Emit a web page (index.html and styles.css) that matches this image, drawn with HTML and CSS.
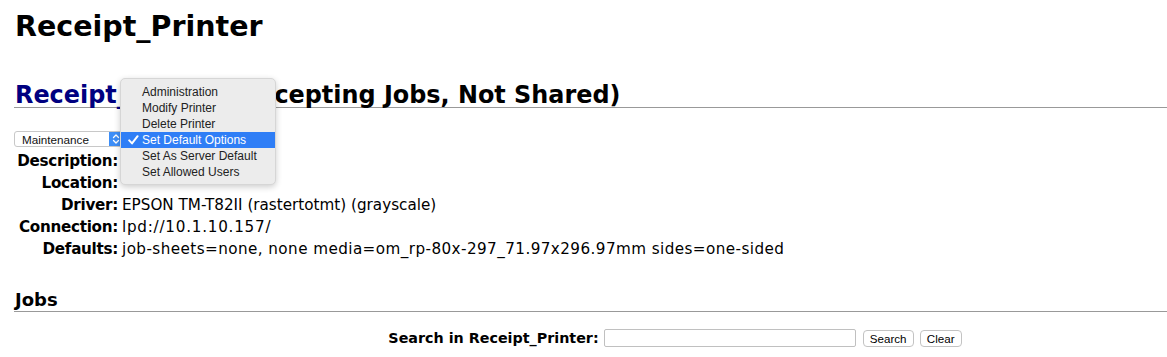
FILE: index.html
```html
<!DOCTYPE html>
<html>
<head>
<meta charset="utf-8">
<title>Receipt_Printer - CUPS</title>
<link rel="stylesheet" href="styles.css">
</head>
<body>
<div class="page">
  <h1 class="title">Receipt_Printer</h1>
  <h2 class="printer-title"><a class="printer-link" href="#">Receipt_Printer</a> (Accepting Jobs, Not Shared)</h2>
  <div class="op-row">
    <div class="select">
      <span class="select-label">Maintenance</span>
      <span class="select-btn">
        <svg width="8" height="12" viewBox="0 0 8 12"><path d="M1.5 4.5 L4 2 L6.5 4.5 M1.5 7.5 L4 10 L6.5 7.5" fill="none" stroke="#fff" stroke-width="1.3" stroke-linecap="round" stroke-linejoin="round"/></svg>
      </span>
    </div>
  </div>
  <dl class="info">
    <dt>Description:</dt><dd></dd>
    <dt>Location:</dt><dd></dd>
    <dt>Driver:</dt><dd class="val-driver">EPSON TM-T82II (rastertotmt) (grayscale)</dd>
    <dt>Connection:</dt><dd class="val-conn">lpd://10.1.10.157/</dd>
    <dt>Defaults:</dt><dd class="val-defaults">job-sheets=none, none media=om_rp-80x-297_71.97x296.97mm sides=one-sided</dd>
  </dl>
  <h3 class="section">Jobs</h3>
  <form class="search">
    <label class="search-label">Search in Receipt_Printer:</label>
    <span class="search-input"></span>
    <span class="btn btn-search">Search</span>
    <span class="btn btn-clear">Clear</span>
  </form>
</div>
<div class="menu">
  <div class="menu-item">Administration</div>
  <div class="menu-item">Modify Printer</div>
  <div class="menu-item">Delete Printer</div>
  <div class="menu-item selected"><svg class="check" width="11" height="10" viewBox="0 0 11 10"><path d="M1.2 5.4 L4 8.4 L9.6 1.2" fill="none" stroke="#fff" stroke-width="2" stroke-linecap="round" stroke-linejoin="round"/></svg>Set Default Options</div>
  <div class="menu-item">Set As Server Default</div>
  <div class="menu-item">Set Allowed Users</div>
</div>
</body>
</html>
```
FILE: styles.css
```css
html, body {
  margin: 0;
  padding: 0;
  background: #fff;
  overflow: hidden;
}
body {
  font-family: "DejaVu Sans", sans-serif;
  color: #000;
}
.page {
  width: 1322px;
  padding-left: 14px;
}
.title {
  font-size: 28.5px;
  line-height: 36px;
  font-weight: bold;
  margin: 9px 0 0 1px;
}
.printer-title {
  font-size: 23.9px;
  line-height: 24px;
  font-weight: bold;
  margin: 38px 0 0 0;
  padding-left: 1px;
  border-bottom: 1px solid #999;
}
.printer-link {
  color: #000080;
  text-decoration: none;
}
.op-row {
  margin-top: 23px;
  height: 16px;
}
.select {
  width: 109px;
  height: 16px;
  box-sizing: border-box;
  border: 1px solid #c8c8c8;
  border-radius: 3px;
  display: flex;
  align-items: center;
  background: #fff;
  overflow: hidden;
}
.select-label {
  flex: 1;
  font-family: "Liberation Sans", sans-serif;
  font-size: 11.7px;
  padding-left: 7px;
  color: #111;
}
.select-btn {
  width: 13px;
  height: 16px;
  background: #3d8ef7;
  display: flex;
  align-items: center;
  justify-content: center;
}
.info {
  display: grid;
  grid-template-columns: 104px 1fr;
  column-gap: 4px;
  margin: 3px 0 0 0;
  font-size: 15.2px;
  line-height: 22px;
}
.info dt {
  font-weight: bold;
  text-align: right;
  letter-spacing: -0.3px;
}
.info dd {
  margin: 0;
  white-space: nowrap;
}
.val-conn { letter-spacing: 0.75px; }
.val-defaults { letter-spacing: 0.43px; }
.section {
  font-size: 18px;
  line-height: 18px;
  font-weight: bold;
  margin: 31px 0 0 0;
  padding: 0 0 2px 1px;
  border-bottom: 1px solid #999;
}
.search {
  display: flex;
  justify-content: center;
  align-items: center;
  margin-top: 16px;
  height: 20px;
}
.search-label {
  font-size: 14.3px;
  font-weight: bold;
  margin-right: 5px;
}
.search-input {
  width: 252px;
  height: 18px;
  box-sizing: border-box;
  border: 1px solid #c0c0c0;
  border-radius: 2px;
  margin-right: 7px;
}
.btn {
  font-family: "Liberation Sans", sans-serif;
  font-size: 11.6px;
  height: 17px;
  box-sizing: border-box;
  border: 1px solid #c3c3c3;
  border-radius: 4px;
  display: flex;
  align-items: center;
  justify-content: center;
  background: #fff;
}
.btn-search { width: 51px; margin-right: 6px; }
.btn-clear { width: 42px; }
.menu {
  position: absolute;
  left: 120px;
  top: 78px;
  width: 156px;
  box-sizing: border-box;
  padding: 5px 0 4px 0;
  background: #ececec;
  border: 1px solid #d6d6d6;
  border-radius: 5px;
  box-shadow: 0 2px 6px rgba(0,0,0,0.2);
  font-family: "Liberation Sans", sans-serif;
  font-size: 12px;
}
.menu-item {
  height: 16px;
  line-height: 16px;
  padding-left: 21px;
  color: #222;
  position: relative;
}
.menu-item.selected {
  background: #2f7ef6;
  color: #fff;
}
.check {
  position: absolute;
  left: 7px;
  top: 3px;
}
```
